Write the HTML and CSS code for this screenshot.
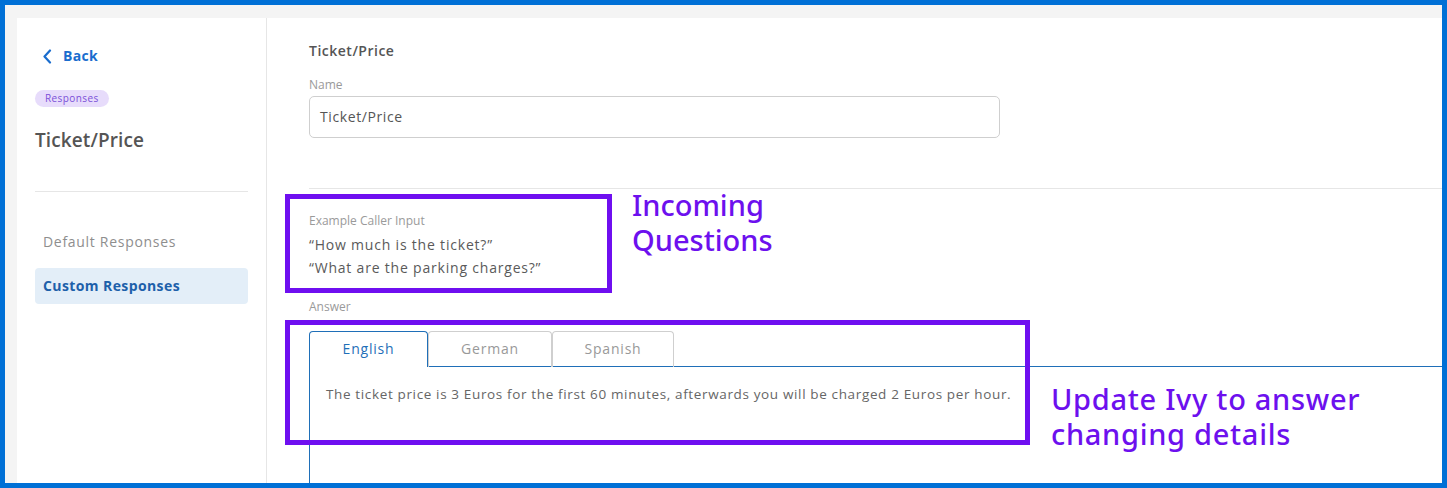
FILE: index.html
```html
<!DOCTYPE html>
<html>
<head>
<meta charset="utf-8">
<link rel="stylesheet" href="styles.css">
</head>
<body>
<div class="frame">
  <div class="app">
    <aside class="sidebar">
      <a class="back">
        <svg width="10" height="15" viewBox="0 0 10 15"><path d="M8 1.5 L2.5 7.5 L8 13.5" fill="none" stroke="#1a6dce" stroke-width="2.2" stroke-linecap="round" stroke-linejoin="round"/></svg>
        <span>Back</span>
      </a>
      <span class="badge">Responses</span>
      <h1 class="side-title">Ticket/Price</h1>
      <hr class="side-divider">
      <nav class="side-nav">
        <div class="nav-item">Default Responses</div>
        <div class="nav-item active">Custom Responses</div>
      </nav>
    </aside>
    <main class="main">
      <div class="section">
        <h2 class="page-title">Ticket/Price</h2>
        <label class="field-label">Name</label>
        <div class="input">Ticket/Price</div>
      </div>
      <hr class="main-divider">
      <div class="section">
        <div class="field-label">Example Caller Input</div>
        <div class="quotes">
          <div>“How much is the ticket?”</div>
          <div>“What are the parking charges?”</div>
        </div>
        <div class="field-label answer-label">Answer</div>
        <div class="tabs">
          <div class="tab active">English</div>
          <div class="tab">German</div>
          <div class="tab">Spanish</div>
        </div>
        <div class="panel">
          <p>The ticket price is 3 Euros for the first 60 minutes, afterwards you will be charged 2 Euros per hour.</p>
        </div>
      </div>

      <div class="anno-box box-questions"></div>
      <div class="anno-text text-questions">Incoming<br>Questions</div>
      <div class="anno-box box-answer"></div>
      <div class="anno-text text-answer">Update Ivy to answer<br>changing details</div>
    </main>
  </div>
</div>
</body>
</html>
```
FILE: styles.css
```css
* { box-sizing: border-box; }
html, body { margin: 0; padding: 0; height: 100%; }
body {
  font-family: "Open Sans", "Liberation Sans", sans-serif;
  background: #0070d6;
}
.frame {
  height: 488px;
  padding: 5px;
  background: #0070d6;
}
.app {
  height: 100%;
  background: #f4f4f4;
  padding: 13px 0 0 12px;
  display: flex;
  overflow: hidden;
}
.sidebar {
  width: 250px;
  flex: none;
  background: #fff;
  border-right: 1px solid #e6e6e6;
  padding: 28px 18px 0 18px;
  display: flex;
  flex-direction: column;
  align-items: flex-start;
}
.back {
  display: flex;
  align-items: center;
  gap: 11px;
  padding-left: 7px;
  color: #1a6dce;
  font-weight: 700;
  font-size: 14px;
  line-height: 20px;
  height: 20px;
  letter-spacing: 0.3px;
}
.back svg { display: block; }
.badge {
  margin-top: 24px;
  background: #e7dcfb;
  color: #7b4fd8;
  font-size: 10px;
  line-height: 17px;
  padding: 0 10px;
  letter-spacing: 0.4px;
  border-radius: 9px;
}
.side-title {
  margin: 21px 0 0;
  font-size: 19px;
  line-height: 24px;
  font-weight: 600;
  color: #555;
  letter-spacing: 0.1px;
}
.side-divider {
  align-self: stretch;
  margin: 39px 0 0;
  border: 0;
  border-top: 1px solid #e6e6e6;
}
.side-nav {
  align-self: stretch;
  margin-top: 40px;
  display: flex;
  flex-direction: column;
  gap: 16px;
}
.nav-item {
  font-size: 14px;
  line-height: 20px;
  color: #8e8e8e;
  padding: 0 8px;
  letter-spacing: 0.7px;
}
.nav-item.active {
  background: #e3eef8;
  color: #1d60aa;
  font-weight: 700;
  border-radius: 4px;
  height: 36px;
  line-height: 36px;
  letter-spacing: 0.4px;
}
.main {
  position: relative;
  flex: 1;
  background: #fff;
  padding-top: 23px;
}
.section { padding-left: 42px; }
.page-title {
  margin: 0;
  font-size: 14px;
  line-height: 20px;
  font-weight: 600;
  color: #555;
  letter-spacing: 0.5px;
}
.field-label {
  display: block;
  font-size: 12px;
  line-height: 16px;
  color: #9a9a9a;
  margin-top: 16px;
}
.input {
  margin-top: 3px;
  width: 691px;
  height: 42px;
  border: 1px solid #cfcfcf;
  border-radius: 5px;
  padding: 0 10px;
  font-size: 14px;
  line-height: 40px;
  color: #555;
  letter-spacing: 0.6px;
}
.main-divider {
  margin: 50px 0 0 42px;
  border: 0;
  border-top: 1px solid #e6e6e6;
}
.section .field-label:first-child { margin-top: 24px; }
.quotes {
  margin-top: 4px;
  font-size: 14px;
  line-height: 23px;
  color: #5a5a5a;
  letter-spacing: 0.8px;
}
.answer-label { margin-top: 20px; }
.tabs {
  margin-top: 16px;
  display: flex;
}
.tab {
  height: 36px;
  margin-bottom: -1px;
  border: 1px solid #cfcfcf;
  border-bottom: 0;
  border-radius: 4px 4px 0 0;
  font-size: 14px;
  line-height: 34px;
  color: #999;
  text-align: center;
  letter-spacing: 0.8px;
}
.tab:nth-child(1) { width: 119px; }
.tab:nth-child(2) { width: 124px; }
.tab:nth-child(3) { width: 122px; }
.tab.active {
  border-color: #1f6fb8;
  color: #1f6fb8;
  background: #fff;
  position: relative;
  z-index: 1;
}
.panel {
  border-top: 1px solid #1f6fb8;
  border-left: 1px solid #1f6fb8;
  height: 200px;
  padding: 17px 16px;
}
.panel p {
  margin: 0;
  font-size: 13.5px;
  line-height: 20px;
  color: #666;
  letter-spacing: 0.64px;
}
.anno-box {
  position: absolute;
  border: 5px solid #6f0ff0;
}
.box-questions { left: 18px; top: 176px; width: 327px; height: 99px; }
.box-answer { left: 18px; top: 302px; width: 745px; height: 125px; }
.anno-text {
  position: absolute;
  color: #6d10ee;
  font-family: "Noto Sans", "Open Sans", sans-serif;
  font-size: 29px;
  line-height: 35px;
  font-weight: 500;
}
.text-questions { left: 365px; top: 169px; }
.text-answer { left: 784px; top: 363px; letter-spacing: 0.7px; }
```
